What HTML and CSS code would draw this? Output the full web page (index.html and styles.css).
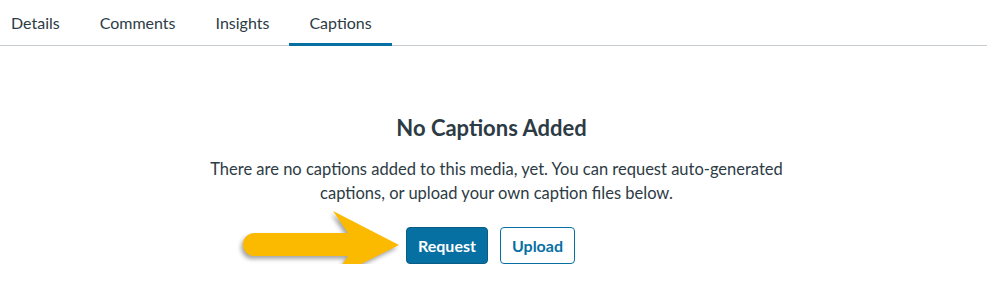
FILE: index.html
```html
<!DOCTYPE html>
<html lang="en">
<head>
    <meta charset="UTF-8">
    <title>Captions</title>
    <link rel="stylesheet" href="styles.css">
</head>
<body>
    <div class="tabs">
        <div class="tab">Details</div>
        <div class="tab">Comments</div>
        <div class="tab">Insights</div>
        <div class="tab active">Captions</div>
    </div>

    <div class="empty">
        <h2 class="empty-title">No Captions Added</h2>
        <p class="empty-text">There are no captions added to this media, yet. You can request auto-generated captions, or upload your own caption files below.</p>
        <div class="actions">
            <svg class="arrow" width="160" height="72" viewBox="0 0 160 72">
                <path d="M11.5 22 H105 L90 0 L156 34 L90 67 L105 45 H11.5 A11.5 11.5 0 0 1 11.5 22 Z" fill="#fbb900"/>
            </svg>
            <button class="btn btn-primary">Request</button>
            <button class="btn btn-secondary">Upload</button>
        </div>
    </div>
</body>
</html>
```

FILE: styles.css
```css
* {
    margin: 0;
    padding: 0;
    box-sizing: border-box;
}
body {
    font-family: Lato, "Liberation Sans", sans-serif;
    color: #2d3b45;
    background-color: #fff;
}

.tabs {
    display: flex;
    border-bottom: 1px solid #c7cdd1;
}
.tab {
    height: 46px;
    margin-bottom: -1px;
    padding: 2px 20px 0;
    display: flex;
    align-items: center;
    font-size: 16px;
    border-bottom: 3px solid transparent;
}
.tab:first-child {
    padding-left: 11px;
}
.tab.active {
    border-bottom-color: #0770a3;
}

.empty {
    display: flex;
    flex-direction: column;
    align-items: center;
    padding-top: 68px;
}
.empty-title {
    margin-right: 4px;
    font-size: 22px;
    line-height: 27px;
    font-weight: 700;
}
.empty-text {
    margin-top: 16px;
    padding-left: 6px;
    max-width: 620px;
    font-size: 16.5px;
    line-height: 24px;
    text-align: center;
}

.actions {
    position: relative;
    display: flex;
    gap: 12px;
    margin-top: 22px;
    margin-right: 6px;
}
.arrow {
    position: absolute;
    left: -163px;
    top: -16px;
    filter: drop-shadow(-2px 3px 2px rgba(0, 0, 0, 0.35));
}
.btn {
    font-family: Lato, "Liberation Sans", sans-serif;
    font-size: 16px;
    font-weight: 700;
    line-height: 23px;
    padding: 6px 11px;
    border-radius: 4px;
    border: 1px solid #0770a3;
}
.btn-primary {
    background-color: #0770a3;
    border-color: #0a5b85;
    color: #fff;
}
.btn-secondary {
    background-color: #fff;
    color: #0770a3;
}
```
